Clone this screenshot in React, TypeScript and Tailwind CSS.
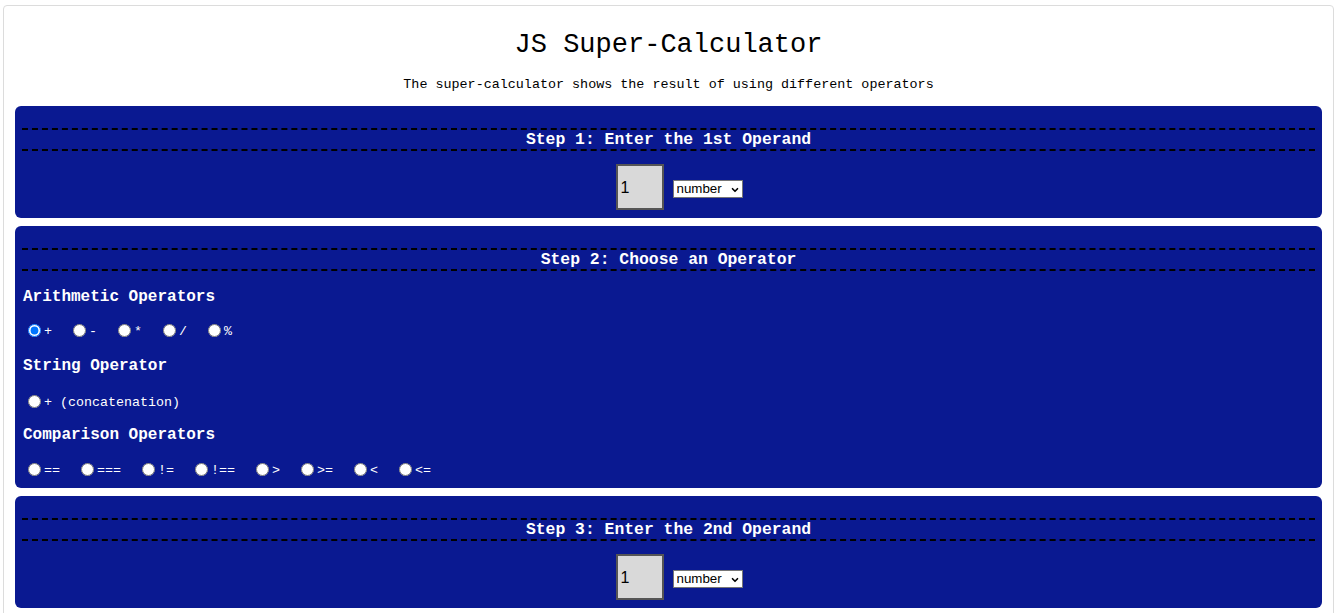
import { ChevronDown } from 'lucide-react'

const mono = { fontFamily: '"Liberation Mono", "Courier New", monospace' }

const arithmetic = ['+', '-', '*', '/', '%']
const comparison = ['==', '===', '!=', '!==', '>', '>=', '<', '<=']

function StepHeading({ children }: { children: string }) {
  return (
    <h3 className="border-y-2 border-dashed border-black pt-px text-center text-[16.4px] font-bold leading-[18px] text-white">
      {children}
    </h3>
  )
}

function OperandRow({ name }: { name: string }) {
  return (
    <div className="mt-[13px] flex items-center justify-center gap-[9px] pl-[21px]">
      <input
        name={name}
        defaultValue="1"
        className="h-[46px] w-[48px] border-2 border-[#555] bg-[#d9d9d9] pl-[3px] pt-px text-[16px] text-black"
        style={{ fontFamily: '"Liberation Sans", Arial, sans-serif' }}
      />
      <div className="relative mt-[3px]">
        <select
          className="block h-[18px] w-[70px] appearance-none border border-[#767676] bg-white pl-[3px] text-[13.33px] leading-[16px] text-black"
          style={{ fontFamily: '"Liberation Sans", Arial, sans-serif' }}
        >
          <option>number</option>
          <option>string</option>
          <option>boolean</option>
        </select>
        <ChevronDown className="pointer-events-none absolute right-[3px] top-[5px] size-[10px] text-black" strokeWidth={4} />
      </div>
    </div>
  )
}

function RadioItem({ group, label, checked }: { group: string, label: string, checked?: boolean }) {
  return (
    <label className="mr-[16px] inline-flex items-center text-[13.33px] text-white">
      <input type="radio" name={group} defaultChecked={checked} className="ml-[5px] mr-[3px] size-[13px]" />
      <span className="whitespace-pre pt-[3px]">{label}</span>
    </label>
  )
}

function GroupLabel({ children, className }: { children: string, className: string }) {
  return <p className={`h-[19px] pl-px text-[16px] font-bold leading-[19px] text-white ${className}`}>{children}</p>
}

export default function App() {
  return (
    <div className="min-h-screen bg-white pt-[5px]" style={mono}>
      <div className="ml-[3px] w-[1331px] rounded-t-[4px] border border-[#dcdcdc] px-[11px] pb-4 pt-[23px]">
        <h1 className="text-center text-[27px] leading-[32px] text-black">JS Super-Calculator</h1>
        <p className="mt-[16px] text-center text-[13.4px] leading-[16px] text-black">
          The super-calculator shows the result of using different operators
        </p>

        <section className="mt-[13px] rounded-[6px] bg-[#0a1991] px-[7px] pb-[8px] pt-[22px]">
          <StepHeading>Step 1: Enter the 1st Operand</StepHeading>
          <OperandRow name="operand1" />
        </section>

        <section className="mt-[8px] rounded-[6px] bg-[#0a1991] px-[7px] pb-[11px] pt-[22px]">
          <StepHeading>Step 2: Choose an Operator</StepHeading>
          <GroupLabel className="mt-[17px]">Arithmetic Operators</GroupLabel>
          <div className="mt-[15px] flex h-[16px] items-center pl-px">
            {arithmetic.map((op, i) => (
              <RadioItem key={op} group="operator" label={op} checked={i === 0} />
            ))}
          </div>
          <GroupLabel className="mt-[19px]">String Operator</GroupLabel>
          <div className="mt-[17px] flex h-[16px] items-center pl-px">
            <RadioItem group="operator" label="+ (concatenation)" />
          </div>
          <GroupLabel className="mt-[17px]">Comparison Operators</GroupLabel>
          <div className="mt-[16px] flex h-[16px] items-center pl-px">
            {comparison.map((op) => (
              <RadioItem key={op} group="operator" label={op} />
            ))}
          </div>
        </section>

        <section className="mt-[8px] rounded-[6px] bg-[#0a1991] px-[7px] pb-[8px] pt-[22px]">
          <StepHeading>Step 3: Enter the 2nd Operand</StepHeading>
          <OperandRow name="operand2" />
        </section>
      </div>
    </div>
  )
}
